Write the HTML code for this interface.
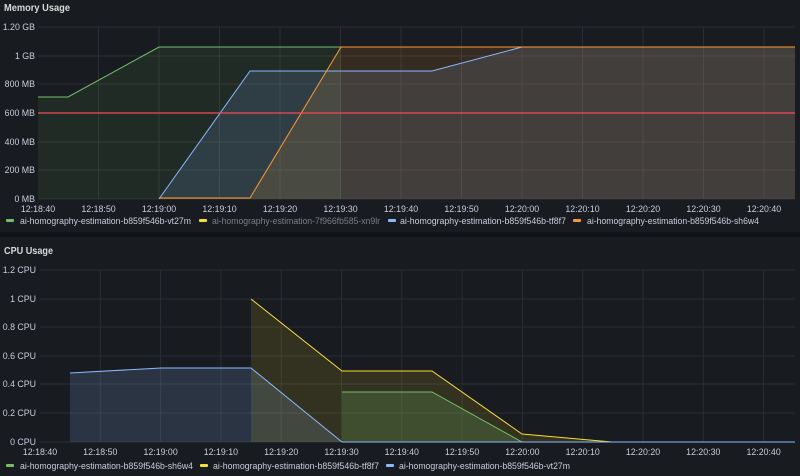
<!DOCTYPE html>
<html><head><meta charset="utf-8"><style>
html,body{margin:0;padding:0;background:#181b1f;}
svg{display:block;font-family:"Liberation Sans",sans-serif;}
</style></head><body>
<svg width="800" height="476" viewBox="0 0 800 476" xmlns="http://www.w3.org/2000/svg">
<rect width="800" height="476" fill="#181b1f"/>
<rect x="0" y="232" width="800" height="5" fill="#111217"/>
<text x="4" y="11" fill="#d8d9da" font-size="10.5" font-weight="bold" textLength="66" lengthAdjust="spacingAndGlyphs">Memory Usage</text>
<text x="4" y="254" fill="#d8d9da" font-size="10.5" font-weight="bold" textLength="49" lengthAdjust="spacingAndGlyphs">CPU Usage</text>
<g stroke="#2a2d33" stroke-width="1">
<path d="M38 27H795M38 56H795M38 84H795M38 113H795M38 142H795M38 170H795M38 199H795"/>
<path d="M98.5 27V199M159 27V199M219.5 27V199M280 27V199M340.5 27V199M401 27V199M461.5 27V199M522 27V199M582.5 27V199M643 27V199M703.5 27V199M764 27V199"/>
<path d="M40 270H795M40 299H795M40 327H795M40 356H795M40 384H795M40 413H795M40 442H795"/>
<path d="M100.3 270V442M160.6 270V442M220.9 270V442M281.2 270V442M341.5 270V442M401.8 270V442M462.1 270V442M522.4 270V442M582.7 270V442M643 270V442M703.3 270V442M763.6 270V442"/>
</g>
<g font-size="8.8" fill="#ccccdc" text-anchor="end">
<text x="35" y="30">1.20 GB</text><text x="35" y="59">1 GB</text><text x="35" y="87">800 MB</text><text x="35" y="116">600 MB</text><text x="35" y="145">400 MB</text><text x="35" y="173">200 MB</text><text x="35" y="202">0 MB</text>
<text x="36" y="273">1.2 CPU</text><text x="36" y="302">1 CPU</text><text x="36" y="330">0.8 CPU</text><text x="36" y="359">0.6 CPU</text><text x="36" y="387">0.4 CPU</text><text x="36" y="416">0.2 CPU</text><text x="36" y="445">0 CPU</text>
</g>
<g font-size="8.8" fill="#ccccdc" text-anchor="middle">
<text x="38" y="212">12:18:40</text><text x="98.5" y="212">12:18:50</text><text x="159" y="212">12:19:00</text><text x="219.5" y="212">12:19:10</text><text x="280" y="212">12:19:20</text><text x="340.5" y="212">12:19:30</text><text x="401" y="212">12:19:40</text><text x="461.5" y="212">12:19:50</text><text x="522" y="212">12:20:00</text><text x="582.5" y="212">12:20:10</text><text x="643" y="212">12:20:20</text><text x="703.5" y="212">12:20:30</text><text x="764" y="212">12:20:40</text>
<text x="40" y="455">12:18:40</text><text x="100.3" y="455">12:18:50</text><text x="160.6" y="455">12:19:00</text><text x="220.9" y="455">12:19:10</text><text x="281.2" y="455">12:19:20</text><text x="341.5" y="455">12:19:30</text><text x="401.8" y="455">12:19:40</text><text x="462.1" y="455">12:19:50</text><text x="522.4" y="455">12:20:00</text><text x="582.7" y="455">12:20:10</text><text x="643" y="455">12:20:20</text><text x="703.3" y="455">12:20:30</text><text x="763.6" y="455">12:20:40</text>
</g>
<!-- memory series -->
<path d="M38 97L68 97L159 47L341 47L341 199L38 199Z" fill="#73bf69" fill-opacity="0.1"/>
<path d="M159 199L250 71L432 71L522 47L795 47L795 199Z" fill="#8ab8ff" fill-opacity="0.14"/>
<path d="M159 198L250 198L341 47L795 47L795 199L159 199Z" fill="#ff9830" fill-opacity="0.13"/>
<path d="M38 97L68 97L159 47L341 47" fill="none" stroke="#73bf69" stroke-width="1"/>
<path d="M159 199L250 71L432 71L522 47L795 47" fill="none" stroke="#8ab8ff" stroke-width="1"/>
<path d="M159 198L250 198L341 47L795 47" fill="none" stroke="#ff9830" stroke-width="1"/>
<path d="M38 113H795" stroke="#f2495c" stroke-width="1.2"/>
<!-- cpu series -->
<path d="M70 373L161 368L251 368L342 442L70 442Z" fill="#8ab8ff" fill-opacity="0.16"/>
<path d="M251 299L342 371L432 371L522 434L612 442L251 442Z" fill="#fade2a" fill-opacity="0.12"/>
<path d="M342 392L432 392L522 442L342 442Z" fill="#73bf69" fill-opacity="0.2"/>
<path d="M251 299L342 371L432 371L522 434L612 442L795 442" fill="none" stroke="#fade2a" stroke-width="1"/>
<path d="M342 392L432 392L522 442L795 442" fill="none" stroke="#73bf69" stroke-width="1"/>
<path d="M70 373L161 368L251 368L342 442L795 442" fill="none" stroke="#8ab8ff" stroke-width="1"/>
<!-- legends -->
<g font-size="9.5" fill="#ccccdc">
<rect x="6" y="219" width="8" height="3" rx="1" fill="#73bf69"/><text x="20" y="224" textLength="171" lengthAdjust="spacingAndGlyphs">ai-homography-estimation-b859f546b-vt27m</text>
<rect x="199" y="219" width="8" height="3" rx="1" fill="#fade2a"/><text x="212" y="224" fill="#7b7f86" textLength="168" lengthAdjust="spacingAndGlyphs">ai-homography-estimation-7f966fb585-xn9lr</text>
<rect x="388" y="219" width="8" height="3" rx="1" fill="#8ab8ff"/><text x="400" y="224" textLength="166" lengthAdjust="spacingAndGlyphs">ai-homography-estimation-b859f546b-tf8f7</text>
<rect x="573" y="219" width="8" height="3" rx="1" fill="#ff9830"/><text x="587" y="224" textLength="172" lengthAdjust="spacingAndGlyphs">ai-homography-estimation-b859f546b-sh6w4</text>
<rect x="6" y="464" width="8" height="3" rx="1" fill="#73bf69"/><text x="20" y="469" textLength="173" lengthAdjust="spacingAndGlyphs">ai-homography-estimation-b859f546b-sh6w4</text>
<rect x="200" y="464" width="8" height="3" rx="1" fill="#fade2a"/><text x="213" y="469" textLength="166" lengthAdjust="spacingAndGlyphs">ai-homography-estimation-b859f546b-tf8f7</text>
<rect x="386" y="464" width="8" height="3" rx="1" fill="#8ab8ff"/><text x="399" y="469" textLength="171" lengthAdjust="spacingAndGlyphs">ai-homography-estimation-b859f546b-vt27m</text>
</g>
</svg>
</body></html>
